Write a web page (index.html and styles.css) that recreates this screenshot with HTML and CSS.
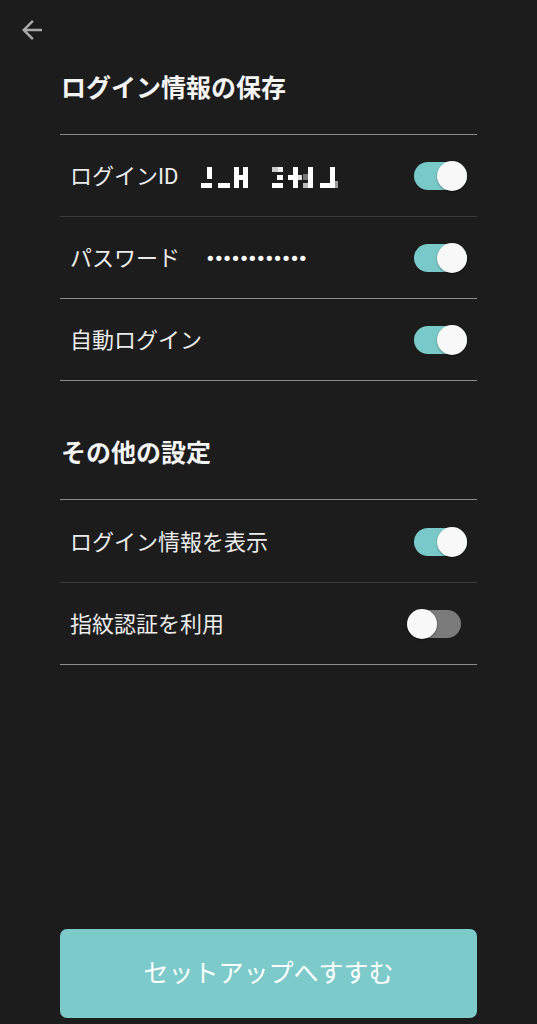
FILE: index.html
```html
<!DOCTYPE html>
<html lang="ja">
<head>
  <meta charset="UTF-8" />
  <meta name="viewport" content="width=device-width, initial-scale=1.0"/>
  <title>ログイン設定</title>
  <link rel="stylesheet" href="styles.css">
</head>
<body>
  <div class="screen">
    <div class="topbar">
      <svg class="back" viewBox="0 0 24 24" width="30" height="30">
        <path d="M20 11H7.83l5.59-5.59L12 4l-8 8 8 8 1.41-1.41L7.83 13H20v-2z" fill="#a9a9a9"/>
      </svg>
    </div>

    <div class="content">
      <h2 class="section-title">ログイン情報の保存</h2>
      <div class="list">
        <div class="row row-dark">
          <span class="label">ログインID</span>
          <span class="value">
            <!-- masked id mosaic -->
            <svg class="mosaic" viewBox="0 0 140 22" width="140" height="22">
              <rect x="7" y="0" width="5" height="12" fill="#fff"/>
              <rect x="1" y="16" width="11" height="5" fill="#fff"/>
              <rect x="18" y="16" width="12" height="5" fill="#fff"/>
              <rect x="34" y="0" width="5" height="21" fill="#fff"/>
              <rect x="43" y="0" width="5" height="21" fill="#fff"/>
              <rect x="39" y="8" width="4" height="5" fill="#fff"/>
              <rect x="72" y="0" width="6" height="5" fill="#ccc"/>
              <rect x="78" y="0" width="5" height="5" fill="#eee"/>
              <rect x="77" y="8" width="6" height="5" fill="#fff"/>
              <rect x="72" y="16" width="11" height="5" fill="#fff"/>
              <rect x="88" y="8" width="5" height="5" fill="#fff"/>
              <rect x="93" y="0" width="5" height="21" fill="#fff"/>
              <rect x="98" y="8" width="4" height="5" fill="#ddd"/>
              <rect x="103" y="7" width="5" height="6" fill="#777"/>
              <rect x="108" y="0" width="5" height="21" fill="#fff"/>
              <rect x="103" y="16" width="5" height="5" fill="#bbb"/>
              <rect x="130" y="0" width="5" height="21" fill="#fff"/>
              <rect x="120" y="16" width="11" height="5" fill="#fff"/>
              <rect x="135" y="14" width="3" height="7" fill="#999"/>
            </svg>
          </span>
          <span class="switch on"><span class="track"></span><span class="thumb"></span></span>
        </div>
        <div class="row">
          <span class="label">パスワード</span>
          <span class="value dots">••••••••••••</span>
          <span class="switch on"><span class="track"></span><span class="thumb"></span></span>
        </div>
        <div class="row">
          <span class="label">自動ログイン</span>
          <span class="switch on"><span class="track"></span><span class="thumb"></span></span>
        </div>
      </div>

      <h2 class="section-title second">その他の設定</h2>
      <div class="list tall">
        <div class="row row-dark">
          <span class="label">ログイン情報を表示</span>
          <span class="switch on"><span class="track"></span><span class="thumb"></span></span>
        </div>
        <div class="row">
          <span class="label">指紋認証を利用</span>
          <span class="switch"><span class="track"></span><span class="thumb"></span></span>
        </div>
      </div>
    </div>

    <button class="next-btn">セットアップへすすむ</button>
  </div>
</body>
</html>
```

FILE: styles.css
```css
body {
  margin: 0;
  background: #1c1c1c;
  font-family: Roboto, "Noto Sans CJK JP", sans-serif;
  color: #ececec;
}

.screen {
  height: 1024px;
  display: flex;
  flex-direction: column;
}

.topbar {
  height: 60px;
  padding: 15px 0 0 17px;
  box-sizing: border-box;
}

.back {
  display: block;
}

.content {
  padding: 0 60px;
}

.section-title {
  margin: 11px 0 0;
  padding: 0 0 27px 1px;
  font-size: 25px;
  line-height: 36px;
  font-weight: 700;
  color: #f4f4f4;
  border-bottom: 1px solid #8c8c8c;
}

.section-title.second {
  margin-top: 55px;
}

.row {
  height: 82px;
  display: flex;
  align-items: center;
  padding: 3px 10px 0;
  border-bottom: 1px solid #8c8c8c;
  font-size: 22px;
  line-height: 30px;
  box-sizing: border-box;
}

.tall .row-dark {
  height: 83px;
}

.row-dark {
  border-bottom-color: #3a3a3a;
}

.label {
  min-width: 130px;
  white-space: nowrap;
  flex-shrink: 0;
}

.value {
  flex: 1;
  display: flex;
  align-items: center;
}

.mosaic {
  display: block;
  margin-top: 1px;
}

.dots {
  font-family: "DejaVu Sans", sans-serif;
  font-size: 18px;
  letter-spacing: -2.2px;
  padding-left: 5px;
  color: #fff;
}

.switch {
  position: relative;
  width: 60px;
  height: 31px;
  margin: -3px 0 0 auto;
  flex-shrink: 0;
}

.track {
  position: absolute;
  left: 1px;
  top: 2px;
  width: 53px;
  height: 28px;
  border-radius: 14px;
  background: #7b7b7b;
}

.thumb {
  position: absolute;
  left: 0;
  top: 1px;
  width: 30px;
  height: 30px;
  border-radius: 50%;
  background: #f8f8f8;
  box-shadow: 0 1px 2px rgba(0, 0, 0, 0.35);
}

.switch.on .track {
  left: auto;
  right: 0;
  background: #79c9c8;
}

.switch.on .thumb {
  left: auto;
  right: 0;
}

.next-btn {
  margin: auto 60px 6px;
  height: 89px;
  border: none;
  border-radius: 7px;
  background: #7ccaca;
  color: #fff;
  font-family: "Noto Sans CJK JP", sans-serif;
  font-size: 25px;
  font-weight: 400;
  padding-bottom: 6px;
  cursor: pointer;
}
```
